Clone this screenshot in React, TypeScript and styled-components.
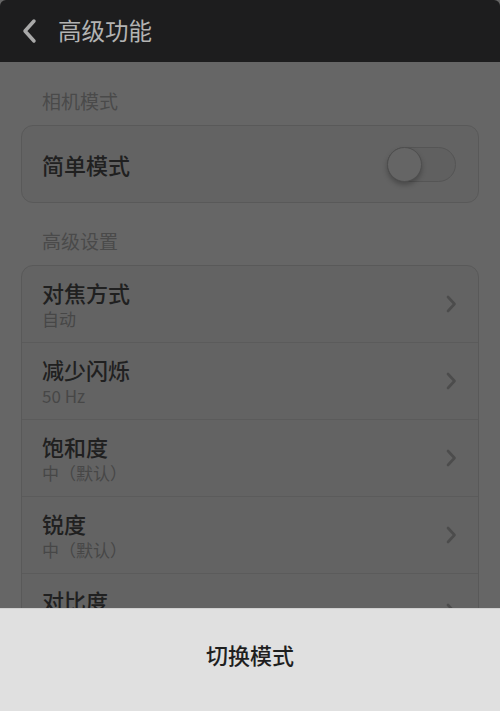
import React, { FC } from 'react';
import styled, { createGlobalStyle } from 'styled-components';

const GlobalStyle = createGlobalStyle`
  html, body {
    margin: 0;
    padding: 0;
    background: #666666;
  }
  body {
    font-family: "Noto Sans CJK SC", "Noto Sans", sans-serif;
  }
`;

const Screen = styled.div`
  display: flex;
  flex-direction: column;
  height: 711px;
  overflow: hidden;
  background: #666666;
`;

const Header = styled.div`
  display: flex;
  align-items: center;
  height: 62px;
  flex-shrink: 0;
  background: #1d1d1e;
  padding-left: 20px;
  gap: 18px;
  border-top-left-radius: 6px;
  border-top-right-radius: 6px;
`;

const Title = styled.span`
  color: #b3b3b3;
  font-size: 23.5px;
  line-height: 1;
`;

const Content = styled.div`
  flex: 1;
  overflow: hidden;
  padding: 28px 21px 0;
`;

const SectionLabel = styled.div<{ $first?: boolean }>`
  color: #4a4a4a;
  font-size: 19px;
  line-height: 22px;
  padding-left: 21px;
  margin-top: ${(p) => (p.$first ? '0' : '27px')};
  margin-bottom: 13px;
`;

const Card = styled.div`
  background: #636363;
  border: 1px solid #595959;
  border-radius: 12px;
  overflow: hidden;
`;

const Row = styled.div`
  display: flex;
  align-items: center;
  justify-content: space-between;
  height: 76px;
  padding: 0 20px;
  & + & {
    border-top: 1px solid #5b5b5b;
  }
`;

const RowText = styled.div`
  display: flex;
  flex-direction: column;
`;

const RowTitle = styled.span`
  color: #202020;
  font-size: 22px;
  line-height: 28px;
  font-weight: 500;
`;

const RowSub = styled.span`
  color: #474747;
  font-size: 17px;
  line-height: 22px;
  margin-top: 2px;
`;

const Toggle = styled.div`
  position: relative;
  width: 69px;
  height: 35px;
  box-sizing: border-box;
  border-radius: 18px;
  border: 1px solid #555555;
  background: #606060;
  margin-right: 2px;
`;

const Knob = styled.div`
  position: absolute;
  left: -1px;
  top: -1px;
  width: 33px;
  height: 33px;
  border-radius: 50%;
  background: #656565;
  border: 1px solid #4e4e4e;
  box-shadow: 0 3px 5px rgba(0, 0, 0, 0.25);
`;

const Sheet = styled.div`
  flex-shrink: 0;
  height: 90px;
  padding-bottom: 12px;
  background: #e0e0e0;
  border-top: 1px solid #d0d0d0;
  display: flex;
  align-items: center;
  justify-content: center;
`;

const SheetText = styled.span`
  color: #1f1f1f;
  font-size: 22px;
  font-weight: 500;
`;

const BackIcon: FC = () => (
  <svg width="20" height="26" viewBox="0 0 20 26">
    <path d="M14 3 L5 13 L14 23" fill="none" stroke="#a9a9a9" strokeWidth="3.5" strokeLinecap="round" strokeLinejoin="round" />
  </svg>
);

const Chevron: FC = () => (
  <svg width="14" height="20" viewBox="0 0 14 20">
    <path d="M4 3 L10.5 10 L4 17" fill="none" stroke="#4c4c4c" strokeWidth="2.6" strokeLinecap="round" strokeLinejoin="round" />
  </svg>
);

const settings = [
  { title: '对焦方式', sub: '自动' },
  { title: '减少闪烁', sub: '50 Hz' },
  { title: '饱和度', sub: '中（默认）' },
  { title: '锐度', sub: '中（默认）' },
  { title: '对比度', sub: '中（默认）' },
];

const App: FC = () => (
  <>
    <GlobalStyle />
    <Screen>
      <Header>
        <BackIcon />
        <Title>高级功能</Title>
      </Header>
      <Content>
        <SectionLabel $first>相机模式</SectionLabel>
        <Card>
          <Row>
            <RowTitle>简单模式</RowTitle>
            <Toggle>
              <Knob />
            </Toggle>
          </Row>
        </Card>
        <SectionLabel>高级设置</SectionLabel>
        <Card>
          {settings.map((s) => (
            <Row key={s.title}>
              <RowText>
                <RowTitle>{s.title}</RowTitle>
                <RowSub>{s.sub}</RowSub>
              </RowText>
              <Chevron />
            </Row>
          ))}
        </Card>
      </Content>
      <Sheet>
        <SheetText>切换模式</SheetText>
      </Sheet>
    </Screen>
  </>
);

export default App;
